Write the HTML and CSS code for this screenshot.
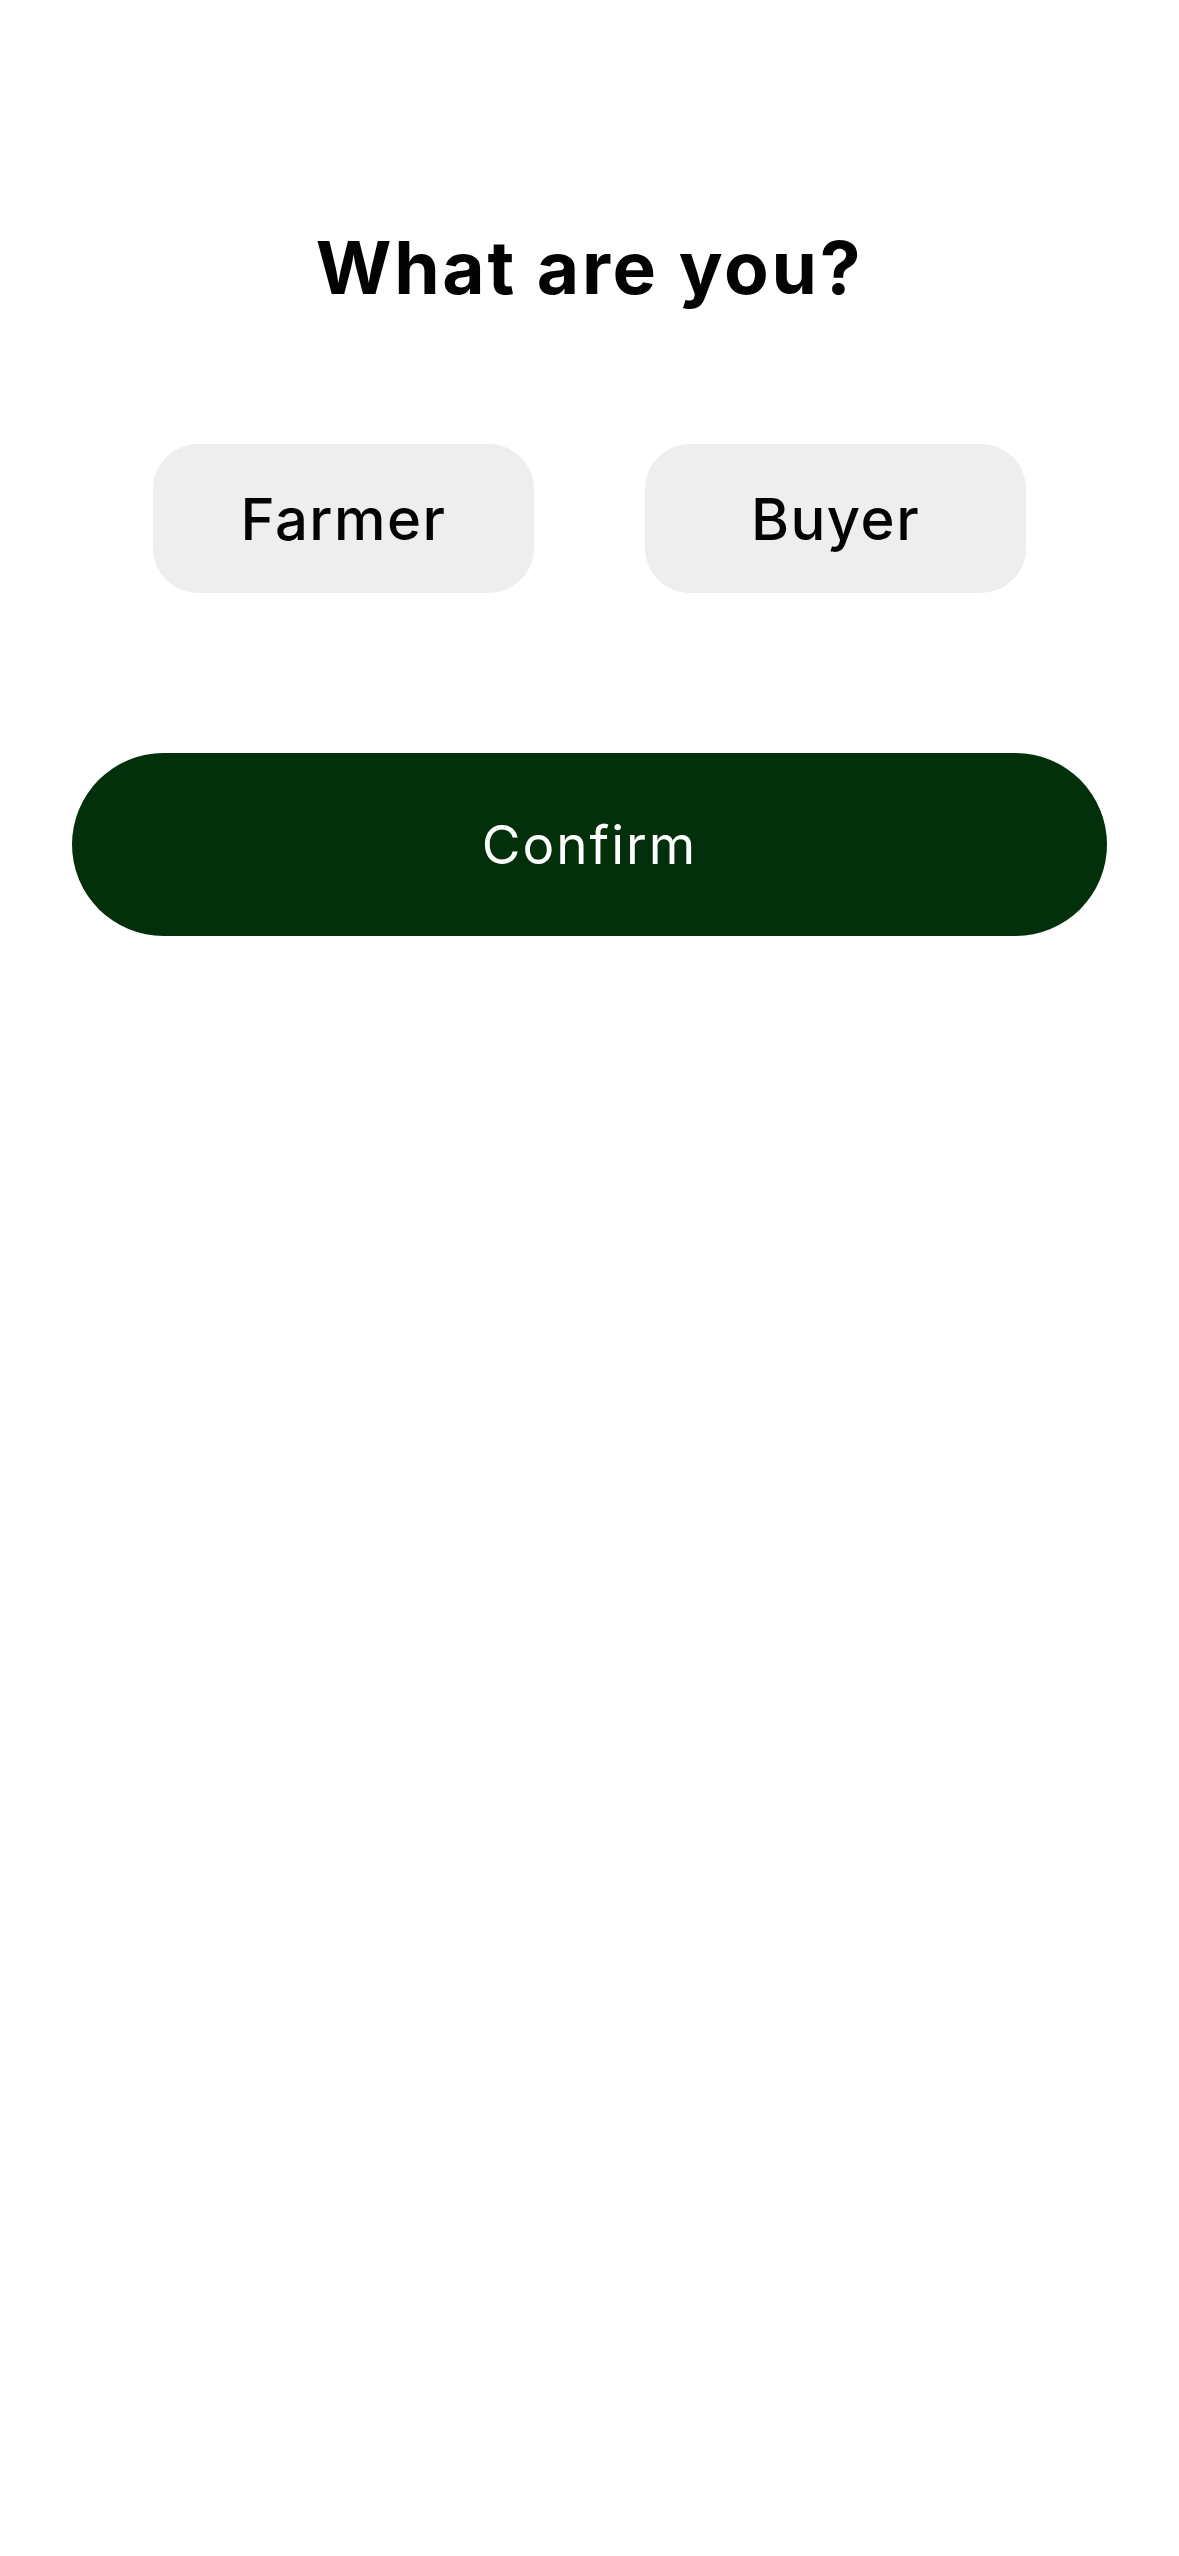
FILE: index.html
```html
<!DOCTYPE html>
<html lang="en">
<head>
<meta charset="utf-8">
<title>What are you?</title>
<link rel="stylesheet" href="styles.css">
</head>
<body>
<main class="screen">
  <h1 class="title">What are you?</h1>
  <div class="choices">
    <button class="choice">Farmer</button>
    <button class="choice">Buyer</button>
  </div>
  <button class="confirm">Confirm</button>
</main>
</body>
</html>
```
FILE: styles.css
```css
html, body {
  margin: 0;
  padding: 0;
  background: #ffffff;
}
body {
  font-family: Inter, "Noto Sans", sans-serif;
  color: #020302;
}
.screen {
  width: 1179px;
  height: 2556px;
  display: flex;
  flex-direction: column;
  align-items: center;
  box-sizing: border-box;
  padding-top: 231px;
}
.title {
  margin: 0;
  font-size: 73px;
  line-height: 73px;
  font-weight: 700;
  letter-spacing: 2.7px;
  text-align: center;
}
.choices {
  margin-top: 140px;
  display: flex;
  gap: 111px;
}
.choice {
  width: 381px;
  height: 149px;
  border: none;
  border-radius: 45px;
  background: #eeeeee;
  font-family: inherit;
  font-size: 58px;
  font-weight: 500;
  letter-spacing: 1.5px;
  color: #020302;
  display: flex;
  align-items: center;
  justify-content: center;
  padding: 0;
}
.confirm {
  margin-top: 160px;
  width: 1035px;
  height: 183px;
  border: none;
  border-radius: 92px;
  background: #02300a;
  color: #ffffff;
  font-family: inherit;
  font-size: 53px;
  font-weight: 400;
  letter-spacing: 2px;
  display: flex;
  align-items: center;
  justify-content: center;
  padding: 0;
}
```
